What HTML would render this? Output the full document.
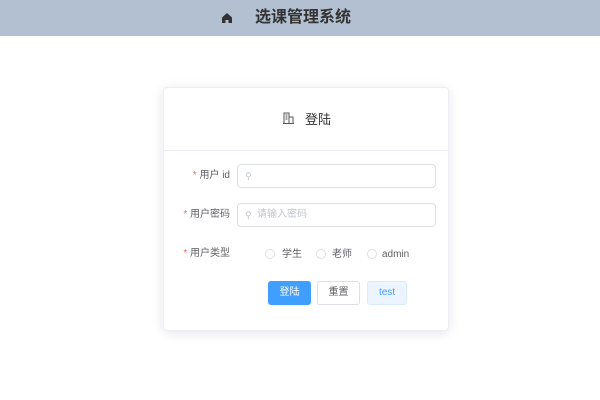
<!DOCTYPE html>
<html><head><meta charset="utf-8"><style>
*{margin:0;padding:0;box-sizing:border-box}
body{width:600px;height:400px;background:#fff;font-family:"Liberation Sans","Noto Sans CJK SC",sans-serif;position:relative;overflow:hidden;color:#606266}
.hd{position:absolute;left:0;top:0;width:600px;height:36px;background:#b3c0d1}
.hd .t{position:absolute;left:255px;top:8px;font-size:16px;font-weight:bold;color:#333;line-height:20px}
.card{position:absolute;left:163px;top:87px;width:286px;height:244px;border:1px solid #ebeef5;border-radius:4px;box-shadow:0 2px 12px rgba(0,0,0,.1);background:#fff}
.line{position:absolute;left:0;right:0;top:62px;border-top:1px solid #ebeef5}
.ab{position:absolute;font-size:10px;line-height:12px}
.lbl{position:absolute;font-size:10px;color:#606266;text-align:right;width:80px;line-height:12px}
.lbl b{color:#f56c6c;font-weight:normal}
.inp{position:absolute;left:237px;width:199px;height:24px;border:1px solid #dcdfe6;border-radius:4px}
.rad{position:absolute;top:249px;width:10px;height:10px;border:1px solid #dcdfe6;border-radius:50%}
.btn{position:absolute;top:281px;height:24px;border-radius:3px;font-size:10px;line-height:24px;text-align:center}
</style></head><body>
<div class="hd">
<svg style="position:absolute;left:221px;top:12px" width="12" height="12" viewBox="0 0 12 12"><path d="M6 1L1 5.5V11H4.5V8H7.5V11H11V5.5Z" fill="#333"/></svg>
<div class="t">选课管理系统</div>
</div>
<div class="card"><div class="line"></div></div>
<svg style="position:absolute;left:283px;top:112px" width="11" height="12" viewBox="0 0 11 12"><path d="M1 11V1H6V11M6 5H10V11M0 11.5H11M2.5 3H4.5M2.5 5H4.5M2.5 7H4.5" stroke="#555" fill="none" stroke-width="1"/></svg>
<div class="ab" style="left:305px;top:112px;font-size:13px;line-height:15px;color:#333">登陆</div>
<div class="lbl" style="left:150px;top:170px"><b>* </b>用户 id</div>
<div class="inp" style="top:164px"></div>
<div class="ab" style="left:245px;top:170px;color:#c0c4cc;font-size:9px">⚲</div>
<div class="lbl" style="left:150px;top:209px"><b>* </b>用户密码</div>
<div class="inp" style="top:203px"></div>
<div class="ab" style="left:245px;top:209px;color:#c0c4cc;font-size:9px">⚲</div>
<div class="ab" style="left:257px;top:209px;color:#c0c4cc">请输入密码</div>
<div class="lbl" style="left:150px;top:248px"><b>* </b>用户类型</div>
<div class="rad" style="left:265px"></div><div class="ab" style="left:282px;top:249px">学生</div>
<div class="rad" style="left:316px"></div><div class="ab" style="left:332px;top:249px">老师</div>
<div class="rad" style="left:367px"></div><div class="ab" style="left:382px;top:249px">admin</div>
<div class="btn" style="left:268px;width:43px;background:#409eff;color:#fff;border:1px solid #409eff;line-height:22px">登陆</div>
<div class="btn" style="left:317px;width:43px;background:#fff;color:#606266;border:1px solid #dcdfe6;line-height:22px">重置</div>
<div class="btn" style="left:367px;width:40px;background:#ecf5ff;color:#409eff;border:1px solid #d9ecff;line-height:22px">test</div>
</body></html>
